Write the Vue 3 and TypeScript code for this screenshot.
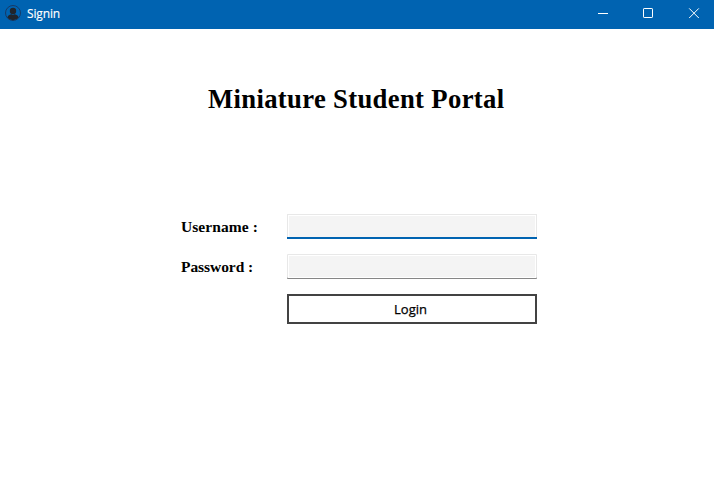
<script setup lang="ts">
import { ref } from 'vue'

const username = ref('')
const password = ref('')
</script>

<template>
  <div class="window">
    <header class="titlebar">
      <svg class="avatar" width="16" height="16" viewBox="0 0 16 16">
        <circle cx="8" cy="8" r="7.5" fill="none" stroke="#173a66" stroke-width="1" />
        <circle cx="8" cy="5.9" r="3.2" fill="#20252c" />
        <path d="M2.3 12.2C3.4 10 5.2 9.6 6.4 9.3Q8 10.2 9.6 9.3C10.8 9.6 12.6 10 13.7 12.2A7 7 0 0 1 2.3 12.2Z" fill="#20252c" />
      </svg>
      <span class="caption">Signin</span>
      <div class="controls">
        <button class="control" type="button" aria-label="Minimize">
          <svg width="12" height="12" viewBox="0 0 12 12"><path d="M1 5.5H11" /></svg>
        </button>
        <button class="control" type="button" aria-label="Maximize">
          <svg width="12" height="12" viewBox="0 0 12 12"><rect x="1.5" y="0.5" width="9" height="9" rx="0.6" /></svg>
        </button>
        <button class="control last" type="button" aria-label="Close">
          <svg width="12" height="12" viewBox="0 0 12 12"><path d="M1.2 0.4L10.8 10M10.8 0.4L1.2 10" /></svg>
        </button>
      </div>
    </header>
    <main class="content">
      <h1 class="title">Miniature Student Portal</h1>
      <form class="form" @submit.prevent>
        <label class="label user" for="username">Username :</label>
        <input id="username" v-model="username" class="field active" type="text" />
        <label class="label pass" for="password">Password :</label>
        <input id="password" v-model="password" class="field" type="password" />
        <button class="login" type="submit">Login</button>
      </form>
    </main>
  </div>
</template>

<style>
body {
  background: #fff;
}
</style>

<style scoped>
.window {
  width: 714px;
  height: 478px;
  overflow: hidden;
  background: #fff;
}
.titlebar {
  display: flex;
  align-items: center;
  box-sizing: border-box;
  height: 29px;
  padding: 0 0 3px 5px;
  background: #0063b1;
}
.caption {
  margin-left: 6px;
  padding-top: 2px;
  font: 12px/16px "Open Sans", "Noto Sans", sans-serif;
  letter-spacing: -0.15px;
  -webkit-text-stroke: 0.15px #fff;
  color: #fff;
}
.controls {
  display: flex;
  margin-left: auto;
  margin-right: -4px;
}
.control {
  display: flex;
  align-items: center;
  justify-content: center;
  box-sizing: border-box;
  width: 45px;
  height: 26px;
  padding: 2px 0 0;
  border: 0;
  background: none;
}
.control.last {
  width: 48px;
}
.control svg {
  fill: none;
  stroke: #fff;
  stroke-width: 1;
}
.content {
  display: flex;
  flex-direction: column;
  padding-top: 55px;
}
.title {
  margin: 0 0 0 208px;
  font: bold 26.67px/30px "Liberation Serif", serif;
  letter-spacing: 0.34px;
  white-space: nowrap;
  color: #000;
}
.form {
  display: grid;
  grid-template-columns: 106px 250px;
  grid-template-rows: 25px 25px 30px;
  row-gap: 15px;
  margin: 100px 0 0 181px;
}
.label {
  font: bold 15.5px/26px "Liberation Serif", serif;
  white-space: nowrap;
  color: #000;
}
.label.user {
  letter-spacing: 0.07px;
}
.label.pass {
  letter-spacing: -0.06px;
}
.field {
  box-sizing: border-box;
  width: 250px;
  height: 25px;
  margin: 0;
  padding: 0 5px;
  border: 0;
  border-radius: 1px;
  outline: none;
  background: #f4f4f4;
  box-shadow: inset 0 -1px #868686, inset 0 0 0 1px #e8e8e8, inset 0 -2px #fff, inset 0 0 0 2px #fff;
}
.field.active {
  border-radius: 0;
  box-shadow: inset 0 -2px #0063b1, inset 0 0 0 1px #e8e8e8, inset 0 0 0 2px #fff;
}
.login {
  grid-column: 2;
  box-sizing: border-box;
  margin: 0;
  padding: 0 3px 1px 0;
  border: 2px solid #434343;
  background: #fff;
  font: 500 13px/18px "Open Sans", "Noto Sans", sans-serif;
  -webkit-text-stroke: 0.25px #000;
  color: #000;
}
</style>
